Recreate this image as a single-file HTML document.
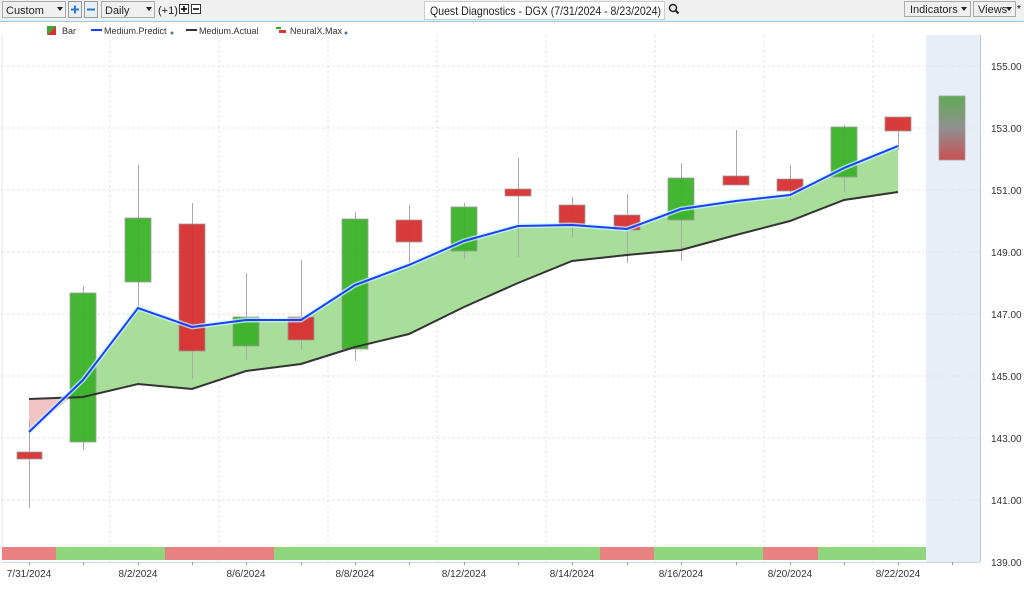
<!DOCTYPE html><html><head><meta charset="utf-8"><style>
body{margin:0;width:1024px;height:584px;overflow:hidden;background:#fff;font-family:"Liberation Sans",sans-serif;}
</style></head><body>
<svg width="1024" height="584" xmlns="http://www.w3.org/2000/svg" font-family="Liberation Sans, sans-serif">
<defs>
<linearGradient id="fc" x1="0" y1="0" x2="0" y2="1"><stop offset="0" stop-color="#5aa84c"/><stop offset="0.5" stop-color="#8c8c8c"/><stop offset="1" stop-color="#c84848"/></linearGradient>
</defs>
<rect x="0" y="0" width="1024" height="21" fill="#f0f0f0"/>
<line x1="0" y1="21.5" x2="1024" y2="21.5" stroke="#9cc8e8"/>
<rect x="2.5" y="1.5" width="63" height="16" fill="#f0f0f0" stroke="#aaa"/><text x="6" y="14" font-size="11" fill="#222">Custom</text><path d="M57 7h6l-3 4z" fill="#222"/>
<rect x="68.5" y="1.5" width="13" height="16" fill="#e8eef6" stroke="#999"/><path d="M71 9.5h8M75 5.5v8" stroke="#2a7ad0" stroke-width="2"/>
<rect x="84.5" y="1.5" width="13" height="16" fill="#e8eef6" stroke="#999"/><path d="M87 9.5h8" stroke="#2a7ad0" stroke-width="2"/>
<rect x="101.5" y="1.5" width="53" height="16" fill="#f0f0f0" stroke="#aaa"/><text x="105" y="14" font-size="11" fill="#222">Daily</text><path d="M146 7h6l-3 4z" fill="#222"/>
<text x="158" y="14" font-size="11" fill="#222">(+1)</text>
<rect x="179.5" y="4.5" width="9" height="9" fill="#fff" stroke="#333"/><path d="M181 9h6M184 6v6" stroke="#000" stroke-width="1.5"/>
<rect x="191.5" y="4.5" width="9" height="9" fill="#fff" stroke="#333"/><path d="M193 9h6" stroke="#000" stroke-width="1.5"/>
<rect x="424.5" y="1.5" width="240" height="18" fill="#fff" stroke="#ccc"/><text x="430" y="15" font-size="12" fill="#222" textLength="231" lengthAdjust="spacingAndGlyphs">Quest Diagnostics - DGX (7/31/2024 - 8/23/2024)</text>
<circle cx="673" cy="8" r="3.5" fill="none" stroke="#222" stroke-width="1.5"/><path d="M675.5 10.5l3 3" stroke="#222" stroke-width="2"/>
<rect x="904.5" y="1.5" width="66" height="15" fill="#f0f0f0" stroke="#aaa"/><text x="910" y="13" font-size="11" fill="#222">Indicators</text><path d="M961 7h6l-3 4z" fill="#222"/>
<rect x="973.5" y="1.5" width="42" height="15" fill="#f0f0f0" stroke="#aaa"/><text x="978" y="13" font-size="11" fill="#222">Views</text><path d="M1006 7h6l-3 4z" fill="#222"/><text x="1017" y="12" font-size="10">*</text>
<path d="M47 35h9v-9z" fill="#d83030"/><path d="M47 26h9l-9 9z" fill="#3aaa2a"/><text x="62" y="34" font-size="9" fill="#333">Bar</text>
<rect x="91" y="29" width="11" height="2" fill="#2040ff"/><text x="104" y="34" font-size="9" fill="#333">Medium.Predict</text><circle cx="172" cy="33" r="1.5" fill="#4a7a9a"/>
<rect x="186" y="29" width="11" height="2" fill="#333"/><text x="199" y="34" font-size="9" fill="#333">Medium.Actual</text>
<rect x="276" y="27" width="5" height="2" fill="#3a3"/><rect x="279" y="30" width="7" height="3" fill="#d33"/><text x="290" y="34" font-size="9" fill="#333">NeuralX.Max</text><circle cx="346" cy="33" r="1.5" fill="#4a7a9a"/>
<rect x="926" y="35" width="54" height="527" fill="#e8eef6"/>
<line x1="980.5" y1="35" x2="980.5" y2="562" stroke="#b8cce0"/>
<g stroke="#e4e4e4" stroke-dasharray="3,2">
<path d="M2 66H980M2 128H980M2 190H980M2 252H980M2 314H980M2 376H980M2 438H980M2 500H980"/>
<path d="M110 35V562M219 35V562M328 35V562M437 35V562M546 35V562M655 35V562M764 35V562M873 35V562"/>
</g>
<path d="M2 35V562" stroke="#e4e4e4"/>
<polygon points="29,399 70,398 29,432" fill="#f3c4c4"/>
<polygon points="70,398 83,380 138,308 192,327 246,320 301,320 355,285 409,265 464,241 518,226 572,225 627,229 681,209 736,201 790,195 844,168 898,146 898,192 844,200 790,221 736,235 681,250 627,255 572,261 518,283 464,307 409,334 355,347 301,364 246,371 192,389 138,384 83,397" fill="#9fd98f" opacity="0.9"/>
<g stroke="#aaa" stroke-width="1">
<path d="M29.5 422V508M83.5 286V450M138.5 165V308M192.5 203V379M246.5 273V360M301.5 260V350M355.5 212V361M409.5 205V268M464.5 203V259M518.5 158V257M572.5 197V237M627.5 194V263M681.5 163V261M736.5 130V185M790.5 165V200M844.5 125V192M898.5 131V150"/>
</g>
<g stroke="#999" stroke-width="0.8" opacity="0.95">
<rect x="17" y="452" width="25" height="7" fill="#d83030"/>
<rect x="70" y="293" width="26" height="149" fill="#3cb22a"/>
<rect x="125" y="218" width="26" height="64" fill="#3cb22a"/>
<rect x="179" y="224" width="26" height="127" fill="#d83030"/>
<rect x="233" y="317" width="26" height="29" fill="#3cb22a"/>
<rect x="288" y="317" width="26" height="23" fill="#d83030"/>
<rect x="342" y="219" width="26" height="130" fill="#3cb22a"/>
<rect x="396" y="220" width="26" height="22" fill="#d83030"/>
<rect x="451" y="207" width="26" height="44" fill="#3cb22a"/>
<rect x="505" y="189" width="26" height="7" fill="#d83030"/>
<rect x="559" y="205" width="26" height="20" fill="#d83030"/>
<rect x="614" y="215" width="26" height="15" fill="#d83030"/>
<rect x="668" y="178" width="26" height="42" fill="#3cb22a"/>
<rect x="723" y="176" width="26" height="9" fill="#d83030"/>
<rect x="777" y="179" width="26" height="12" fill="#d83030"/>
<rect x="831" y="127" width="26" height="50" fill="#3cb22a"/>
<rect x="885" y="117" width="26" height="14" fill="#d83030"/>
<rect x="939" y="96" width="26" height="64" fill="url(#fc)"/>
</g>
<polyline points="29,399 83,397 138,384 192,389 246,371 301,364 355,347 409,334 464,307 518,283 572,261 627,255 681,250 736,235 790,221 844,200 898,192" fill="none" stroke="#333" stroke-width="2"/>
<polyline points="29,432 83,380 138,308 192,327 246,320 301,320 355,285 409,265 464,241 518,226 572,225 627,229 681,209 736,201 790,195 844,168 898,146" fill="none" stroke="#bff" stroke-width="5" opacity="0.7"/>
<polyline points="29,432 83,380 138,308 192,327 246,320 301,320 355,285 409,265 464,241 518,226 572,225 627,229 681,209 736,201 790,195 844,168 898,146" fill="none" stroke="#2838ff" stroke-width="2"/>
<rect x="2" y="547" width="54" height="13" fill="#e88282"/>
<rect x="56" y="547" width="109" height="13" fill="#90d67e"/>
<rect x="165" y="547" width="109" height="13" fill="#e88282"/>
<rect x="274" y="547" width="326" height="13" fill="#90d67e"/>
<rect x="600" y="547" width="54" height="13" fill="#e88282"/>
<rect x="654" y="547" width="109" height="13" fill="#90d67e"/>
<rect x="763" y="547" width="55" height="13" fill="#e88282"/>
<rect x="818" y="547" width="108" height="13" fill="#90d67e"/>
<line x1="2" y1="562.5" x2="980" y2="562.5" stroke="#c8d8e8"/>
<g stroke="#999"><path d="M29.5 562v3M83.5 562v3M138.5 562v3M192.5 562v3M246.5 562v3M301.5 562v3M355.5 562v3M409.5 562v3M464.5 562v3M518.5 562v3M572.5 562v3M627.5 562v3M681.5 562v3M736.5 562v3M790.5 562v3M844.5 562v3M898.5 562v3M952.5 562v3"/></g>
<g font-size="10" fill="#333">
<text x="991" y="70">155.00</text><text x="991" y="132">153.00</text><text x="991" y="194">151.00</text><text x="991" y="256">149.00</text><text x="991" y="318">147.00</text><text x="991" y="380">145.00</text><text x="991" y="442">143.00</text><text x="991" y="504">141.00</text><text x="991" y="566">139.00</text>
</g>
<g font-size="10" fill="#333" text-anchor="middle">
<text x="29" y="577">7/31/2024</text><text x="138" y="577">8/2/2024</text><text x="246" y="577">8/6/2024</text><text x="355" y="577">8/8/2024</text><text x="464" y="577">8/12/2024</text><text x="572" y="577">8/14/2024</text><text x="681" y="577">8/16/2024</text><text x="790" y="577">8/20/2024</text><text x="898" y="577">8/22/2024</text>
</g>
</svg>
</body></html>
